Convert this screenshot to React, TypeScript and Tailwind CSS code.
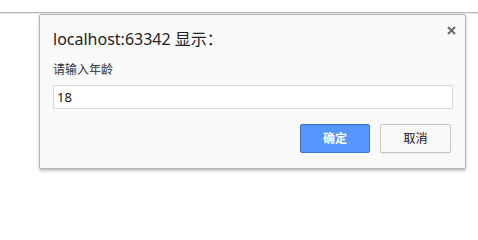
export default function App() {
  return (
    <div className="w-[478px] h-[224px] bg-white overflow-hidden font-['Noto_Sans','Noto_Sans_CJK_SC',sans-serif]">
      <div className="h-[12px]" />
      <div className="h-px bg-[#b9b9b9]" />
      <div className="h-px bg-[#e8e8e8]" />
      <div className="relative ml-[39px] w-[427px] h-[155px] border border-[#b4b4b4] rounded-[2px] bg-[#fafafa] shadow-[0_2px_3px_rgba(0,0,0,0.25)] pl-[13px] pr-[12px] pt-[14px]">
        <button className="absolute right-[9px] top-[10px] w-[10px] h-[10px] flex items-center justify-center">
          <svg width="9" height="9" viewBox="0 0 9 9">
            <path d="M1 1L8 8M8 1L1 8" stroke="#6a6a6a" strokeWidth="2" />
          </svg>
        </button>
        <div className="h-[20px] leading-[20px] text-[16px] text-[#222]">
          localhost:63342 显示：
        </div>
        <div className="mt-[13px] h-[16px] leading-[16px] text-[12px] text-[#333]">
          请输入年龄
        </div>
        <div className="mt-[7px] h-[24px] border border-[#d9d9d9] bg-white px-[3px] text-[13px] leading-[22px] text-[#111]">
          18
        </div>
        <div className="mt-[15px] flex justify-end gap-[10px] pr-[2px]">
          <button className="w-[70px] h-[29px] rounded-[2px] border border-[#3a73d8] bg-[#5596ff] text-white text-[12px] font-bold">
            确定
          </button>
          <button className="w-[71px] h-[29px] rounded-[2px] border border-[#c6c6c6] bg-[#fafafa] shadow-[0_1px_1px_rgba(0,0,0,0.08)] text-[#111] text-[12px]">
            取消
          </button>
        </div>
      </div>
    </div>
  );
}
